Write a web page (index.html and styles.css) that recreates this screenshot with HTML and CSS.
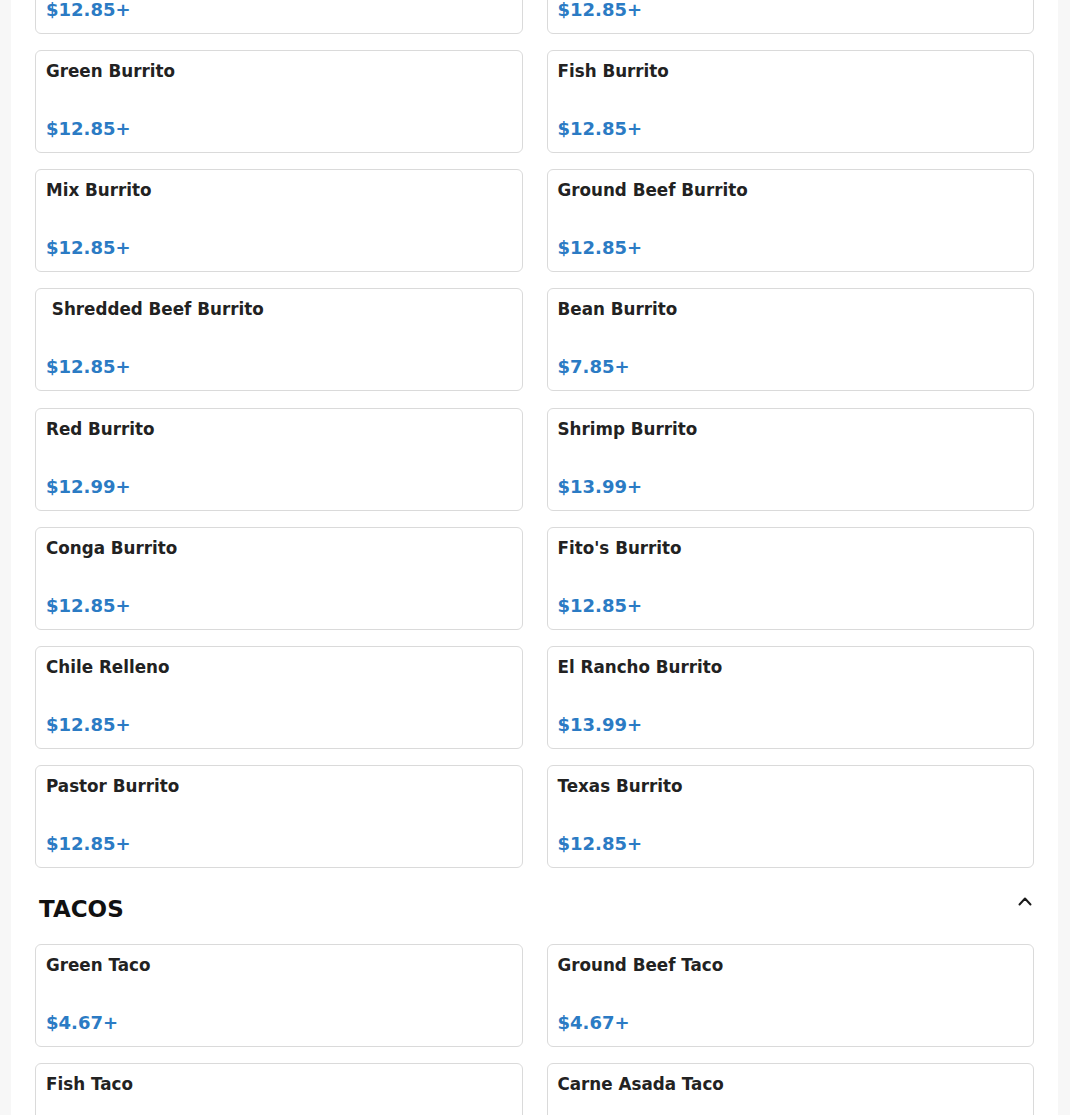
FILE: index.html
```html
<!DOCTYPE html>
<html lang="en">
<head>
<meta charset="utf-8">
<title>Menu</title>
<link rel="stylesheet" href="styles.css">
</head>
<body>
<main class="menu">
  <section class="category">
    <div class="items items-first">
      <div class="item"><div class="item-name">Pollo Burrito</div><div class="item-price">$12.85+</div></div>
      <div class="item"><div class="item-name">Asada Burrito</div><div class="item-price">$12.85+</div></div>
      <div class="item"><div class="item-name">Green Burrito</div><div class="item-price">$12.85+</div></div>
      <div class="item"><div class="item-name">Fish Burrito</div><div class="item-price">$12.85+</div></div>
      <div class="item"><div class="item-name">Mix Burrito</div><div class="item-price">$12.85+</div></div>
      <div class="item"><div class="item-name">Ground Beef Burrito</div><div class="item-price">$12.85+</div></div>
      <div class="item"><div class="item-name">&nbsp;Shredded Beef Burrito</div><div class="item-price">$12.85+</div></div>
      <div class="item"><div class="item-name">Bean Burrito</div><div class="item-price">$7.85+</div></div>
      <div class="item"><div class="item-name">Red Burrito</div><div class="item-price">$12.99+</div></div>
      <div class="item"><div class="item-name">Shrimp Burrito</div><div class="item-price">$13.99+</div></div>
      <div class="item"><div class="item-name">Conga Burrito</div><div class="item-price">$12.85+</div></div>
      <div class="item"><div class="item-name">Fito's Burrito</div><div class="item-price">$12.85+</div></div>
      <div class="item"><div class="item-name">Chile Relleno</div><div class="item-price">$12.85+</div></div>
      <div class="item"><div class="item-name">El Rancho Burrito</div><div class="item-price">$13.99+</div></div>
      <div class="item"><div class="item-name">Pastor Burrito</div><div class="item-price">$12.85+</div></div>
      <div class="item"><div class="item-name">Texas Burrito</div><div class="item-price">$12.85+</div></div>
    </div>
  </section>
  <section class="category">
    <div class="category-header">
      <h2 class="category-title">TACOS</h2>
      <svg class="chevron" width="14" height="14" viewBox="0 0 14 14" aria-hidden="true"><path d="M1.5 10.5 L7 4.5 L12.5 10.5" fill="none" stroke="#1a1a1a" stroke-width="2" stroke-linecap="round" stroke-linejoin="round"/></svg>
    </div>
    <div class="items">
      <div class="item"><div class="item-name">Green Taco</div><div class="item-price">$4.67+</div></div>
      <div class="item"><div class="item-name">Ground Beef Taco</div><div class="item-price">$4.67+</div></div>
      <div class="item"><div class="item-name">Fish Taco</div><div class="item-price">$4.67+</div></div>
      <div class="item"><div class="item-name">Carne Asada Taco</div><div class="item-price">$4.67+</div></div>
    </div>
  </section>
</main>
</body>
</html>
```

FILE: styles.css
```css
html, body {
  margin: 0;
  padding: 0;
}
body {
  background: #f7f7f7;
  font-family: "DejaVu Sans", "Noto Sans", sans-serif;
  overflow: hidden;
  height: 1115px;
}
.menu {
  margin: 0 12px 0 11px;
  background: #ffffff;
  padding: 0 24px;
  min-height: 1115px;
  box-sizing: border-box;
  overflow: hidden;
}
.items {
  display: grid;
  grid-template-columns: 1fr 1fr;
  column-gap: 24px;
  row-gap: 16.2px;
}
.items-first {
  margin-top: -69.2px;
}
.item {
  border: 1px solid #dadada;
  border-radius: 6px;
  padding: 9px 10px 11px;
  background: #fff;
}
.item-name {
  font-size: 16.75px;
  font-weight: bold;
  line-height: 22px;
  color: #222222;
  margin-bottom: 35px;
  white-space: pre;
}
.item-price {
  font-size: 18px;
  font-weight: bold;
  line-height: 24px;
  color: #2b7bc4;
}
.category-header {
  display: flex;
  justify-content: space-between;
  align-items: flex-start;
  padding: 0 2px 0 4px;
  margin: 25.4px 0 20.6px;
}
.category-title {
  margin: 0;
  font-size: 23px;
  line-height: 30px;
  font-weight: bold;
  color: #111111;
}
.chevron {
  margin-top: 0.5px;
  display: block;
}
```
